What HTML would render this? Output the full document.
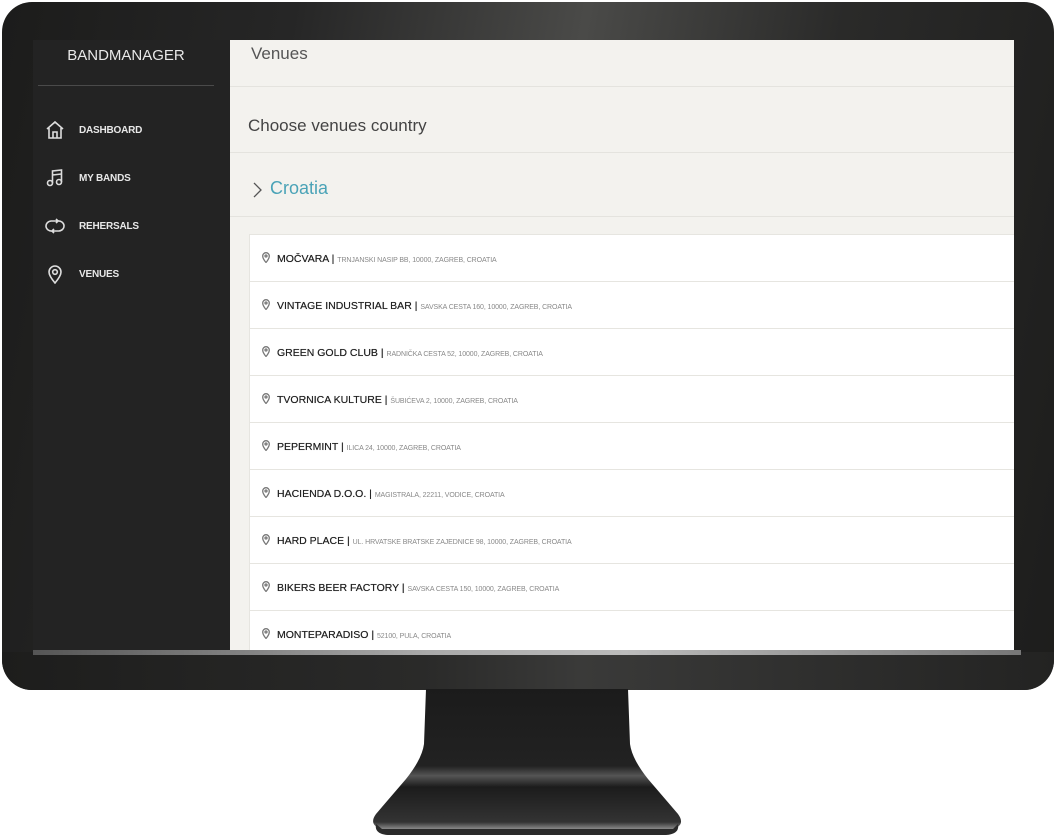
<!DOCTYPE html>
<html><head><meta charset="utf-8"><style>
*{margin:0;padding:0;box-sizing:border-box}
body{width:1056px;height:840px;background:#fff;position:relative;overflow:hidden;font-family:"Liberation Sans","DejaVu Sans",sans-serif}
.mon{position:absolute;left:2px;top:2px;width:1052px;height:688px;border-radius:30px;background:linear-gradient(100deg,#1c1c1b 0%,#262626 25%,#4a4a48 50%,#2a2a29 72%,#1d1d1c 100%)}
.bot{position:absolute;left:2px;top:652px;width:1052px;height:38px;border-radius:0 0 30px 30px;background:linear-gradient(90deg,#1d1d1c,#2a2a29 40%,#3a3a39 55%,#232322 100%)}
.strip{position:absolute;left:33px;top:650px;width:988px;height:5px;background:linear-gradient(90deg,#555,#aaa 40%,#bbb 60%,#777)}
.screen{position:absolute;left:33px;top:40px;width:981px;height:610px;overflow:hidden;background:#f3f2ee}
.side{position:absolute;left:0;top:0;width:197px;height:610px;background:#232323;color:#e8e8e8}
.logo{position:absolute;left:0;width:186px;top:7px;text-align:center;font-size:15px}
.sline{position:absolute;left:5px;top:45px;width:176px;height:1px;background:#4a4a4a}
.nav{position:absolute;left:12px;display:flex;align-items:center}
.nav span{position:absolute;left:34px;white-space:nowrap;font-weight:bold;font-size:10px;letter-spacing:-.2px}
.main{position:absolute;left:197px;top:0;right:0;bottom:0}
.h1{position:absolute;left:21px;top:4px;font-size:17px;color:#555}
.l{position:absolute;left:0;right:0;height:1px;background:#e4e3de}
.h2{position:absolute;left:18px;top:76px;font-size:17px;color:#444}
.cro{position:absolute;left:40px;top:138px;font-size:18px;color:#4aa3b7}
.chev{position:absolute;left:22px;top:142px}
.list{position:absolute;left:19px;top:194px;right:0;height:430px;background:#fff;border:1px solid #e6e5e0;border-right:none}
.row{height:47px;border-bottom:1px solid #e6e5e0;position:relative}
.row .t{position:absolute;left:27px;top:18px;font-size:10.5px;color:#222;white-space:nowrap;text-shadow:0 0 .4px #222}
.row .t small{font-size:7px;color:#888;letter-spacing:-.1px;text-shadow:none}
.row svg{position:absolute;left:12px;top:17px}
</style></head><body>
<div class="mon"></div>
<div class="bot"></div>
<svg style="position:absolute;left:368px;top:689px" width="318" height="150" viewBox="0 0 318 150">
<defs><linearGradient id="g" x1="0" y1="0" x2="0" y2="1"><stop offset="0" stop-color="#1b1b1b"/><stop offset=".55" stop-color="#222"/><stop offset=".62" stop-color="#555"/><stop offset=".7" stop-color="#1c1c1c"/><stop offset=".95" stop-color="#333"/><stop offset="1" stop-color="#888"/></linearGradient></defs>
<path d="M58 0 L260 0 L262 55 Q264 70 280 90 L310 125 Q318 136 305 140 L14 140 Q0 136 8 125 L38 90 Q54 70 56 55 Z" fill="url(#g)"/>
<path d="M8 135 Q6 145 20 146 L298 146 Q312 145 310 135 L305 140 L14 140 Z" fill="#2a2a2a"/>
</svg>
<div class="strip"></div>
<div class="screen">
<div class="side">
<div class="logo">BANDMANAGER</div>
<div class="sline"></div>
<div class="nav" style="top:80px"><svg width="20" height="20" viewBox="0 0 20 20" fill="none" stroke="#ddd" stroke-width="1.6"><path d="M2 9 L10 2 L18 9 M4 8 V18 H16 V8 M8 18 V12 H12 V18"/></svg><span>DASHBOARD</span></div>
<div class="nav" style="top:128px"><svg width="20" height="20" viewBox="0 0 20 20" fill="none" stroke="#ddd" stroke-width="1.6"><circle cx="5" cy="15" r="2.5"/><circle cx="14" cy="14" r="2.5"/><path d="M7.5 15 V3 L16.5 2 V14 M7.5 7 L16.5 6"/></svg><span>MY BANDS</span></div>
<div class="nav" style="top:176px"><svg width="20" height="20" viewBox="0 0 20 20" fill="none" stroke="#ddd" stroke-width="1.6"><path d="M7 15 A5.5 5 0 0 1 6 5 H13 M11 3 L13 5 L11 7 M13 5 A5.5 5 0 0 1 14 15 H7 M9 13 L7 15 L9 17"/></svg><span>REHERSALS</span></div>
<div class="nav" style="top:224px"><svg width="20" height="20" viewBox="0 0 20 20" fill="none" stroke="#ddd" stroke-width="1.6"><path d="M10 19 C5 13 4 10 4 8 A6 6 0 0 1 16 8 C16 10 15 13 10 19 Z"/><circle cx="10" cy="8" r="2.3"/></svg><span>VENUES</span></div>
</div>
<div class="main">
<div class="h1">Venues</div>
<div class="l" style="top:46px"></div>
<div class="h2">Choose venues country</div>
<div class="l" style="top:112px"></div>
<svg class="chev" width="10" height="16" viewBox="0 0 10 16" fill="none" stroke="#555" stroke-width="1.3"><path d="M2 1 L9 8 L2 15"/></svg>
<div class="cro">Croatia</div>
<div class="l" style="top:176px"></div>
<div class="list">
<div class="row"><svg width="8" height="11" viewBox="0 0 8 11" fill="none" stroke="#777" stroke-width="1.3"><path d="M4 10.5 C1 7 .7 5.5 .7 4 A3.3 3.3 0 0 1 7.3 4 C7.3 5.5 7 7 4 10.5Z"/><circle cx="4" cy="4" r="1"/></svg><div class="t">MOČVARA | <small>TRNJANSKI NASIP BB, 10000, ZAGREB, CROATIA</small></div></div>
<div class="row"><svg width="8" height="11" viewBox="0 0 8 11" fill="none" stroke="#777" stroke-width="1.3"><path d="M4 10.5 C1 7 .7 5.5 .7 4 A3.3 3.3 0 0 1 7.3 4 C7.3 5.5 7 7 4 10.5Z"/><circle cx="4" cy="4" r="1"/></svg><div class="t">VINTAGE INDUSTRIAL BAR | <small>SAVSKA CESTA 160, 10000, ZAGREB, CROATIA</small></div></div>
<div class="row"><svg width="8" height="11" viewBox="0 0 8 11" fill="none" stroke="#777" stroke-width="1.3"><path d="M4 10.5 C1 7 .7 5.5 .7 4 A3.3 3.3 0 0 1 7.3 4 C7.3 5.5 7 7 4 10.5Z"/><circle cx="4" cy="4" r="1"/></svg><div class="t">GREEN GOLD CLUB | <small>RADNIČKA CESTA 52, 10000, ZAGREB, CROATIA</small></div></div>
<div class="row"><svg width="8" height="11" viewBox="0 0 8 11" fill="none" stroke="#777" stroke-width="1.3"><path d="M4 10.5 C1 7 .7 5.5 .7 4 A3.3 3.3 0 0 1 7.3 4 C7.3 5.5 7 7 4 10.5Z"/><circle cx="4" cy="4" r="1"/></svg><div class="t">TVORNICA KULTURE | <small>ŠUBIĆEVA 2, 10000, ZAGREB, CROATIA</small></div></div>
<div class="row"><svg width="8" height="11" viewBox="0 0 8 11" fill="none" stroke="#777" stroke-width="1.3"><path d="M4 10.5 C1 7 .7 5.5 .7 4 A3.3 3.3 0 0 1 7.3 4 C7.3 5.5 7 7 4 10.5Z"/><circle cx="4" cy="4" r="1"/></svg><div class="t">PEPERMINT | <small>ILICA 24, 10000, ZAGREB, CROATIA</small></div></div>
<div class="row"><svg width="8" height="11" viewBox="0 0 8 11" fill="none" stroke="#777" stroke-width="1.3"><path d="M4 10.5 C1 7 .7 5.5 .7 4 A3.3 3.3 0 0 1 7.3 4 C7.3 5.5 7 7 4 10.5Z"/><circle cx="4" cy="4" r="1"/></svg><div class="t">HACIENDA D.O.O. | <small>MAGISTRALA, 22211, VODICE, CROATIA</small></div></div>
<div class="row"><svg width="8" height="11" viewBox="0 0 8 11" fill="none" stroke="#777" stroke-width="1.3"><path d="M4 10.5 C1 7 .7 5.5 .7 4 A3.3 3.3 0 0 1 7.3 4 C7.3 5.5 7 7 4 10.5Z"/><circle cx="4" cy="4" r="1"/></svg><div class="t">HARD PLACE | <small>UL. HRVATSKE BRATSKE ZAJEDNICE 98, 10000, ZAGREB, CROATIA</small></div></div>
<div class="row"><svg width="8" height="11" viewBox="0 0 8 11" fill="none" stroke="#777" stroke-width="1.3"><path d="M4 10.5 C1 7 .7 5.5 .7 4 A3.3 3.3 0 0 1 7.3 4 C7.3 5.5 7 7 4 10.5Z"/><circle cx="4" cy="4" r="1"/></svg><div class="t">BIKERS BEER FACTORY | <small>SAVSKA CESTA 150, 10000, ZAGREB, CROATIA</small></div></div>
<div class="row"><svg width="8" height="11" viewBox="0 0 8 11" fill="none" stroke="#777" stroke-width="1.3"><path d="M4 10.5 C1 7 .7 5.5 .7 4 A3.3 3.3 0 0 1 7.3 4 C7.3 5.5 7 7 4 10.5Z"/><circle cx="4" cy="4" r="1"/></svg><div class="t">MONTEPARADISO | <small>52100, PULA, CROATIA</small></div></div>
</div>
</div>
</div>
</body></html>
